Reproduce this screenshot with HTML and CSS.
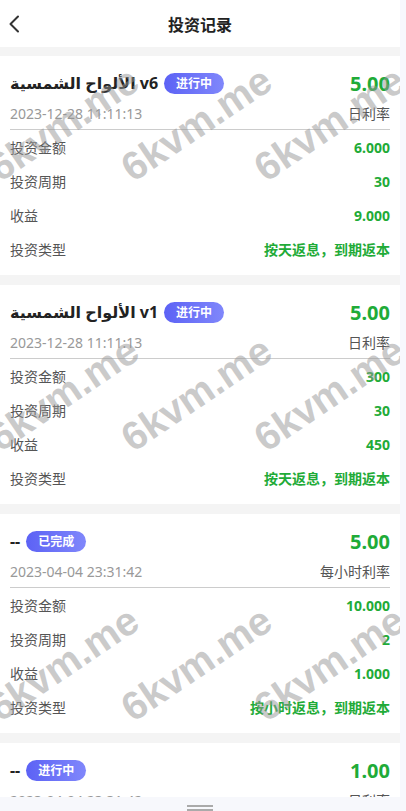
FILE: index.html
```html
<!DOCTYPE html>
<html>
<head>
  <meta charset="utf-8">
  <title>投资记录</title>
  <link rel="stylesheet" href="styles.css">
</head>
<body>
  <!-- Top bar -->
  <div class="nav">
    <span class="back">
      <svg width="12" height="18" viewBox="0 0 12 18"><path d="M10 1.5 L2.5 9 L10 16.5" fill="none" stroke="#333" stroke-width="2" stroke-linecap="round" stroke-linejoin="round"/></svg>
    </span>
    <h1>投资记录</h1>
    <span></span>
  </div>

  <!-- Records -->
  <div class="list">
    <div class="card">
      <div class="card-head">
        <div class="name"><span class="title">الألواح الشمسية v6</span><span class="badge">进行中</span></div>
        <span class="rate">5.00</span>
      </div>
      <div class="card-sub"><span class="time">2023-12-28 11:11:13</span><span class="rate-type">日利率</span></div>
      <div class="row"><span>投资金额</span><span class="val">6.000</span></div>
      <div class="row"><span>投资周期</span><span class="val">30</span></div>
      <div class="row"><span>收益</span><span class="val">9.000</span></div>
      <div class="row"><span>投资类型</span><span class="val type">按天返息，到期返本</span></div>
    </div>

    <div class="card">
      <div class="card-head">
        <div class="name"><span class="title">الألواح الشمسية v1</span><span class="badge">进行中</span></div>
        <span class="rate">5.00</span>
      </div>
      <div class="card-sub"><span class="time">2023-12-28 11:11:13</span><span class="rate-type">日利率</span></div>
      <div class="row"><span>投资金额</span><span class="val">300</span></div>
      <div class="row"><span>投资周期</span><span class="val">30</span></div>
      <div class="row"><span>收益</span><span class="val">450</span></div>
      <div class="row"><span>投资类型</span><span class="val type">按天返息，到期返本</span></div>
    </div>

    <div class="card">
      <div class="card-head">
        <div class="name"><span class="title">--</span><span class="badge">已完成</span></div>
        <span class="rate">5.00</span>
      </div>
      <div class="card-sub"><span class="time">2023-04-04 23:31:42</span><span class="rate-type">每小时利率</span></div>
      <div class="row"><span>投资金额</span><span class="val">10.000</span></div>
      <div class="row"><span>投资周期</span><span class="val">2</span></div>
      <div class="row"><span>收益</span><span class="val">1.000</span></div>
      <div class="row"><span>投资类型</span><span class="val type">按小时返息，到期返本</span></div>
    </div>

    <div class="card">
      <div class="card-head">
        <div class="name"><span class="title">--</span><span class="badge">进行中</span></div>
        <span class="rate">1.00</span>
      </div>
      <div class="card-sub"><span class="time">2023-04-04 23:31:42</span><span class="rate-type">日利率</span></div>
      <div class="row"><span>投资金额</span><span class="val">100</span></div>
      <div class="row"><span>投资周期</span><span class="val">1</span></div>
      <div class="row"><span>收益</span><span class="val">1.000</span></div>
      <div class="row"><span>投资类型</span><span class="val type">按天返息，到期返本</span></div>
    </div>
  </div>

  <!-- Watermark overlay -->
  <svg class="watermark" width="406" height="811" viewBox="0 0 406 811">
    <text transform="translate(0 183) rotate(-34)">6kvm.me</text>
    <text transform="translate(133 183) rotate(-34)">6kvm.me</text>
    <text transform="translate(266 183) rotate(-34)">6kvm.me</text>
    <text transform="translate(0 453) rotate(-34)">6kvm.me</text>
    <text transform="translate(133 453) rotate(-34)">6kvm.me</text>
    <text transform="translate(266 453) rotate(-34)">6kvm.me</text>
    <text transform="translate(0 723) rotate(-34)">6kvm.me</text>
    <text transform="translate(133 723) rotate(-34)">6kvm.me</text>
    <text transform="translate(266 723) rotate(-34)">6kvm.me</text>
  </svg>

  <!-- Home indicator -->
  <div class="home-bar"><i></i></div>
</body>
</html>
```

FILE: styles.css
```css
html {
  background-color: #f7f8fd;
}

body {
  margin: 0;
  width: 400px;
  min-height: 1000px;
  background-color: #f4f4f4;
  font-family: "Noto Sans", "DejaVu Sans", "Noto Sans CJK SC", sans-serif;
  color: #333;
  position: relative;
}

.nav {
  height: 47px;
  background-color: #fff;
  display: grid;
  grid-template-columns: 40px 1fr 40px;
  align-items: center;
}

.nav h1 {
  margin: 0;
  text-align: center;
  font-size: 16px;
  font-weight: 600;
  color: #222;
}

.back {
  display: flex;
  padding-left: 8px;
  padding-top: 1px;
}

.list {
  padding-top: 9px;
  display: flex;
  flex-direction: column;
  gap: 10px;
}

.card {
  background-color: #fff;
  padding: 10px 10px 9px;
}

.card-head {
  height: 34px;
  display: flex;
  align-items: center;
  justify-content: space-between;
}

.name {
  display: flex;
  align-items: center;
  gap: 6px;
}

.title {
  font-size: 16px;
  font-weight: 700;
  color: #222;
}

.badge {
  height: 21px;
  line-height: 21px;
  padding: 0 12px;
  border-radius: 11px;
  background: linear-gradient(90deg, #5c62f5, #8087fb);
  color: #fff;
  font-size: 12px;
  font-weight: 700;
}

.rate {
  font-size: 20px;
  font-weight: 700;
  color: #1fab38;
}

.card-sub {
  height: 26px;
  padding-bottom: 3px;
  border-bottom: 1px solid #ccc;
  display: flex;
  align-items: center;
  justify-content: space-between;
  font-size: 14px;
}

.time {
  color: #999;
}

.rate-type {
  color: #555;
}

.row {
  height: 34px;
  display: flex;
  align-items: center;
  justify-content: space-between;
  font-size: 14px;
  color: #555;
}

.val {
  color: #1fab38;
  font-weight: 700;
}

.type {
  font-weight: 600;
}

.watermark {
  position: absolute;
  top: 0;
  left: 0;
  z-index: 1;
  pointer-events: none;
}

.watermark text {
  font-family: "Liberation Sans", sans-serif;
  font-size: 40px;
  font-weight: 700;
  fill: #969696;
  fill-opacity: 0.5;
}

.home-bar {
  position: fixed;
  left: 0;
  bottom: 0;
  z-index: 2;
  width: 100%;
  height: 14px;
  background-color: #f7f8fc;
  display: flex;
  justify-content: center;
  padding-top: 8px;
  box-sizing: border-box;
  padding-right: 6px;
}

.home-bar i {
  width: 26px;
  height: 2px;
  border-top: 2px solid #aaa;
  border-bottom: 2px solid #aaa;
}
```
